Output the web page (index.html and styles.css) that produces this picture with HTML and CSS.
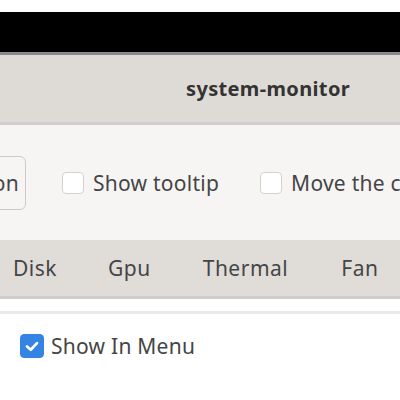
FILE: index.html
```html
<!DOCTYPE html>
<html>
<head>
<meta charset="utf-8">
<link rel="stylesheet" href="styles.css">
</head>
<body>
<div class="top-gap"></div>
<div class="black-bar"></div>
<div class="window">
  <header class="titlebar"><span class="title">system-monitor</span></header>
  <div class="toolbar">
    <div class="button"><span>on</span></div>
    <label class="check"><span class="box"></span><span>Show tooltip</span></label>
    <label class="check"><span class="box"></span><span>Move the c</span></label>
  </div>
  <nav class="tabs">
    <span class="tab t-disk">Disk</span>
    <span class="tab t-gpu">Gpu</span>
    <span class="tab t-thermal">Thermal</span>
    <span class="tab t-fan">Fan</span>
  </nav>
  <div class="strip"></div>
  <div class="content">
    <label class="check checked"><span class="box on"><svg viewBox="0 0 24 24" width="24" height="24"><path d="M6 12.5 L10.5 16.5 L18 8.5" fill="none" stroke="#fff" stroke-width="3.2" stroke-linecap="round" stroke-linejoin="round"/></svg></span><span>Show In Menu</span></label>
  </div>
</div>
</body>
</html>
```

FILE: styles.css
```css
html, body {
  margin: 0;
  padding: 0;
  background: #ffffff;
  width: 400px;
  height: 400px;
  overflow: hidden;
  font-family: "Noto Sans", "DejaVu Sans", sans-serif;
  color: #454545;
}
.top-gap { height: 12px; background: #fff; }
.black-bar { height: 40px; background: #000; }
.window { display: flex; flex-direction: column; }
.titlebar {
  height: 67px;
  background: #dedbd7;
  border-top: 3px solid #8a8a8a;
  border-bottom: 3px solid #d2cfcb;
  display: flex;
  align-items: center;
  justify-content: flex-start;
  padding-left: 186px;
  box-sizing: content-box;
}
.title { font-weight: bold; font-size: 20px; color: #333333; letter-spacing: 0.35px; white-space: nowrap; }
.toolbar {
  height: 115px;
  background: #f6f5f4;
  display: flex;
  align-items: center;
  overflow: hidden;
}
.button {
  flex-shrink: 0;
  margin-left: -38px;
  width: 64px;
  height: 54px;
  border: 1px solid #cfcac5;
  border-radius: 6px;
  box-sizing: border-box;
  display: flex;
  align-items: center;
  justify-content: flex-end;
  padding-right: 6px;
  font-size: 21px;
  letter-spacing: 0.3px;
}
.check {
  display: flex;
  align-items: center;
  font-size: 21px;
  letter-spacing: 0.25px;
  white-space: nowrap;
  flex-shrink: 0;
}
.toolbar .check { margin-left: 36px; }
.toolbar .check + .check { margin-left: 41px; }
.box {
  flex-shrink: 0;
  width: 22px;
  height: 22px;
  border: 1px solid #d6d1cc;
  border-radius: 4px;
  background: #fff;
  box-sizing: border-box;
  margin-right: 9px;
  display: flex;
  align-items: center;
  justify-content: center;
}
.box.on { background: #3584e4; border-color: #3584e4; width: 24px; height: 24px; margin-right: 7px; }
.box.on svg { width: 20px; height: 20px; }
.tabs {
  height: 56px;
  background: #e0ddd9;
  border-bottom: 3px solid #cfcbc7;
  display: flex;
  align-items: center;
  font-size: 21px;
  letter-spacing: 0.5px;
  color: #454545;
  white-space: nowrap;
}
.tab { display: block; flex-shrink: 0; }
.t-disk { margin-left: 13px; }
.t-gpu { margin-left: 51px; }
.t-thermal { margin-left: 52px; }
.t-fan { margin-left: 53px; }
.strip {
  height: 12px;
  background: #fff;
  border-bottom: 3px solid #ebe9e6;
}
.content {
  padding-top: 18px;
  padding-left: 20px;
  background: #fff;
}
```
